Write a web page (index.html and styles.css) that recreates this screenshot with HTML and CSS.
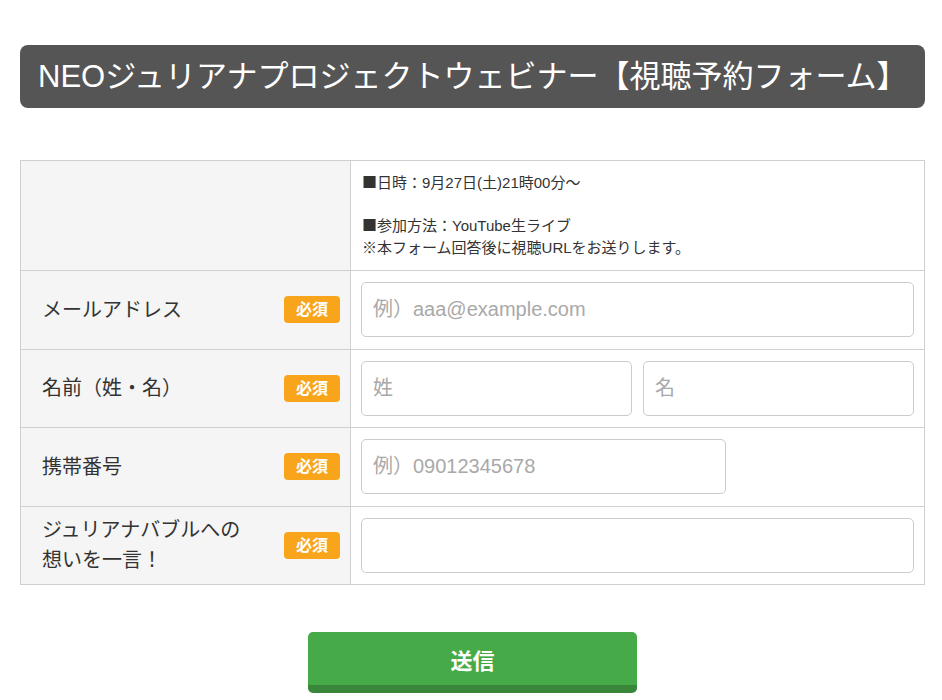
FILE: index.html
```html
<!DOCTYPE html>
<html lang="ja">

<head>
  <meta charset="UTF-8">
  <meta name="viewport" content="width=device-width, initial-scale=1.0">
  <title>視聴予約フォーム</title>
  <link rel="stylesheet" href="styles.css">
</head>

<body>
  <div class="wrap">
    <h1 class="page-title">NEOジュリアナプロジェクトウェビナー【視聴予約フォーム】</h1>

    <form class="entry-form" onsubmit="event.preventDefault()">
      <table class="form-table">
        <tr class="info-row">
          <th class="label-cell"></th>
          <td class="info-cell">
            <p><span class="mark">■</span>日時：9月27日(土)21時00分～</p>
            <p class="gap"><span class="mark">■</span>参加方法：YouTube生ライブ<br>※本フォーム回答後に視聴URLをお送りします。</p>
          </td>
        </tr>
        <tr>
          <th class="label-cell">
            <div class="label-row"><span>メールアドレス</span><span class="req">必須</span></div>
          </th>
          <td class="field-cell">
            <input type="text" class="field full" placeholder="例）aaa@example.com">
          </td>
        </tr>
        <tr>
          <th class="label-cell">
            <div class="label-row"><span>名前（姓・名）</span><span class="req">必須</span></div>
          </th>
          <td class="field-cell">
            <div class="name-pair">
              <input type="text" class="field" placeholder="姓">
              <input type="text" class="field" placeholder="名">
            </div>
          </td>
        </tr>
        <tr>
          <th class="label-cell">
            <div class="label-row"><span>携帯番号</span><span class="req">必須</span></div>
          </th>
          <td class="field-cell">
            <input type="text" class="field tel" placeholder="例）09012345678">
          </td>
        </tr>
        <tr>
          <th class="label-cell">
            <div class="label-row"><span>ジュリアナバブルへの<br>想いを一言！</span><span class="req">必須</span></div>
          </th>
          <td class="field-cell">
            <input type="text" class="field full">
          </td>
        </tr>
      </table>

      <div class="actions">
        <button type="submit" class="send">送信</button>
      </div>
    </form>
  </div>
</body>

</html>
```

FILE: styles.css
```css
/* Page */

body {
  margin: 0;
  font-family: "Liberation Sans", "Noto Sans CJK JP", sans-serif;
  color: #333;
  background: #fff;
}

.wrap {
  width: 905px;
  padding: 45px 0 0 20px;
}

.page-title {
  margin: 0;
  height: 63px;
  padding: 0 18px;
  background-color: #555;
  border-radius: 8px;
  color: #fff;
  font-size: 31px;
  font-weight: normal;
  line-height: 63px;
  white-space: nowrap;
}

/* Form table */

.entry-form {
  margin-top: 52px;
}

.form-table {
  width: 100%;
  border-collapse: collapse;
  table-layout: fixed;
}

.form-table th,
.form-table td {
  border: 1px solid #d0d0d0;
  vertical-align: middle;
  box-sizing: border-box;
}

.label-cell {
  width: 330px;
  background-color: #f5f5f5;
  padding: 0 10px 0 21px;
  font-size: 20px;
  font-weight: normal;
  text-align: left;
  color: #333;
}

.label-row {
  display: flex;
  align-items: center;
  justify-content: space-between;
  line-height: 30px;
}

.req {
  flex: none;
  width: 56px;
  height: 27px;
  background-color: #f8a51b;
  border-radius: 4px;
  color: #fff;
  font-size: 16px;
  font-weight: bold;
  line-height: 27px;
  text-align: center;
}

.info-row {
  height: 110px;
}

.info-cell {
  padding: 0 11px 2px;
  font-size: 15px;
  line-height: 22px;
  color: #333;
}

.info-cell p {
  margin: 0;
}

.info-cell .gap {
  margin-top: 20px;
}

.mark {
  font-family: "Noto Sans CJK JP", sans-serif;
}

.field-cell {
  height: 78.5px;
  padding: 0 10px;
}

.field {
  display: block;
  height: 55px;
  padding: 0 11px;
  border: 1px solid #ccc;
  border-radius: 5px;
  box-sizing: border-box;
  font-family: inherit;
  font-size: 20px;
  color: #333;
  background: #fff;
}

.field::placeholder {
  color: #a9a9a9;
}

.full {
  width: 100%;
}

.tel {
  width: 365px;
}

.name-pair {
  display: flex;
  gap: 11px;
}

.name-pair .field {
  flex: 1;
  min-width: 0;
}

/* Submit */

.actions {
  display: flex;
  justify-content: center;
  margin-top: 47px;
}

.send {
  width: 329px;
  height: 61px;
  background-color: #46aa48;
  border: none;
  border-bottom: 8px solid #3a873b;
  border-radius: 5px;
  color: #fff;
  font-family: inherit;
  font-size: 22px;
  font-weight: bold;
  cursor: pointer;
}
```
